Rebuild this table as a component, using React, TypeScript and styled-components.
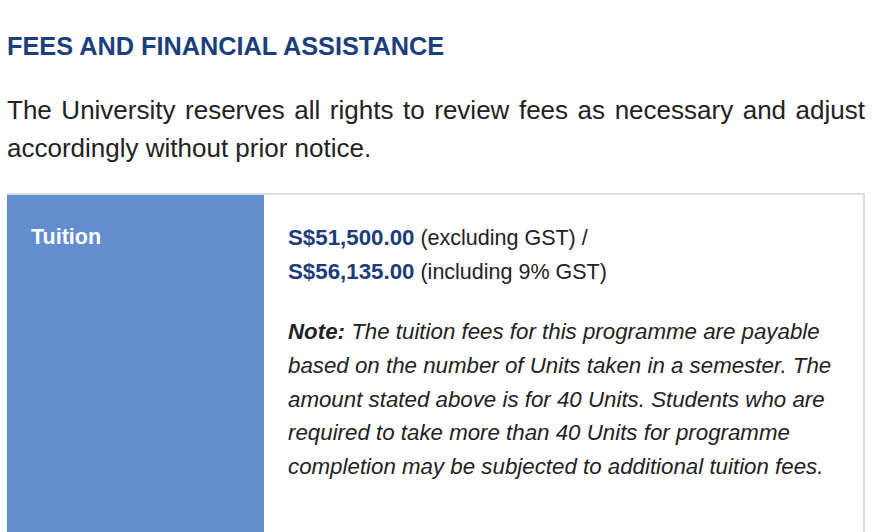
import styled, { createGlobalStyle } from 'styled-components';

const GlobalStyle = createGlobalStyle`
    body {
        margin: 0;
        background: #ffffff;
        font-family: "Liberation Sans", Arial, Helvetica, sans-serif;
        color: #222222;
    }
`

const Section = styled.section`
    padding: 0 9px 0 7px;
`

const Heading = styled.h2`
    margin: 31px 0 0;
    font-size: 25.3px;
    line-height: 30px;
    font-weight: 700;
    color: #1b3f7c;
`

const Intro = styled.p`
    margin: 30px 0 0;
    font-size: 26px;
    line-height: 38px;
    text-align: justify;
`

const FeeTable = styled.div`
    margin-top: 26px;
    display: grid;
    grid-template-columns: 257px 1fr;
    border-top: 2px solid #dcdcdc;
    border-right: 2px solid #dcdcdc;
    min-height: 400px;
`

const LabelCell = styled.div`
    background: #628ed0;
    color: #ffffff;
    font-weight: 700;
    font-size: 21.5px;
    line-height: 34px;
    padding: 25px 24px 0;
`

const ValueCell = styled.div`
    padding: 26px 24px 80px;
    font-size: 21.5px;
    line-height: 34px;
`

const Amount = styled.strong`
    color: #1d3d7a;
    font-weight: 700;
    font-size: 22.3px;
`

const Note = styled.p`
    margin: 26px 0 0;
    font-size: 22.3px;
    font-style: italic;
    line-height: 33.75px;
`

export default function App() {
    return (
        <>
            <GlobalStyle />
            <Section>
                <Heading>FEES AND FINANCIAL ASSISTANCE</Heading>
                <Intro>
                    The University reserves all rights to review fees as necessary and adjust
                    accordingly without prior notice.
                </Intro>
                <FeeTable>
                    <LabelCell>Tuition</LabelCell>
                    <ValueCell>
                        <Amount>S$51,500.00</Amount> (excluding GST) /
                        <br />
                        <Amount>S$56,135.00</Amount> (including 9% GST)
                        <Note>
                            <strong>Note:</strong> The tuition fees for this programme are payable
                            based on the number of Units taken in a semester. The amount stated
                            above is for 40 Units. Students who are required to take more than 40
                            Units for programme completion may be subjected to additional tuition
                            fees.
                        </Note>
                    </ValueCell>
                </FeeTable>
            </Section>
        </>
    );
}
